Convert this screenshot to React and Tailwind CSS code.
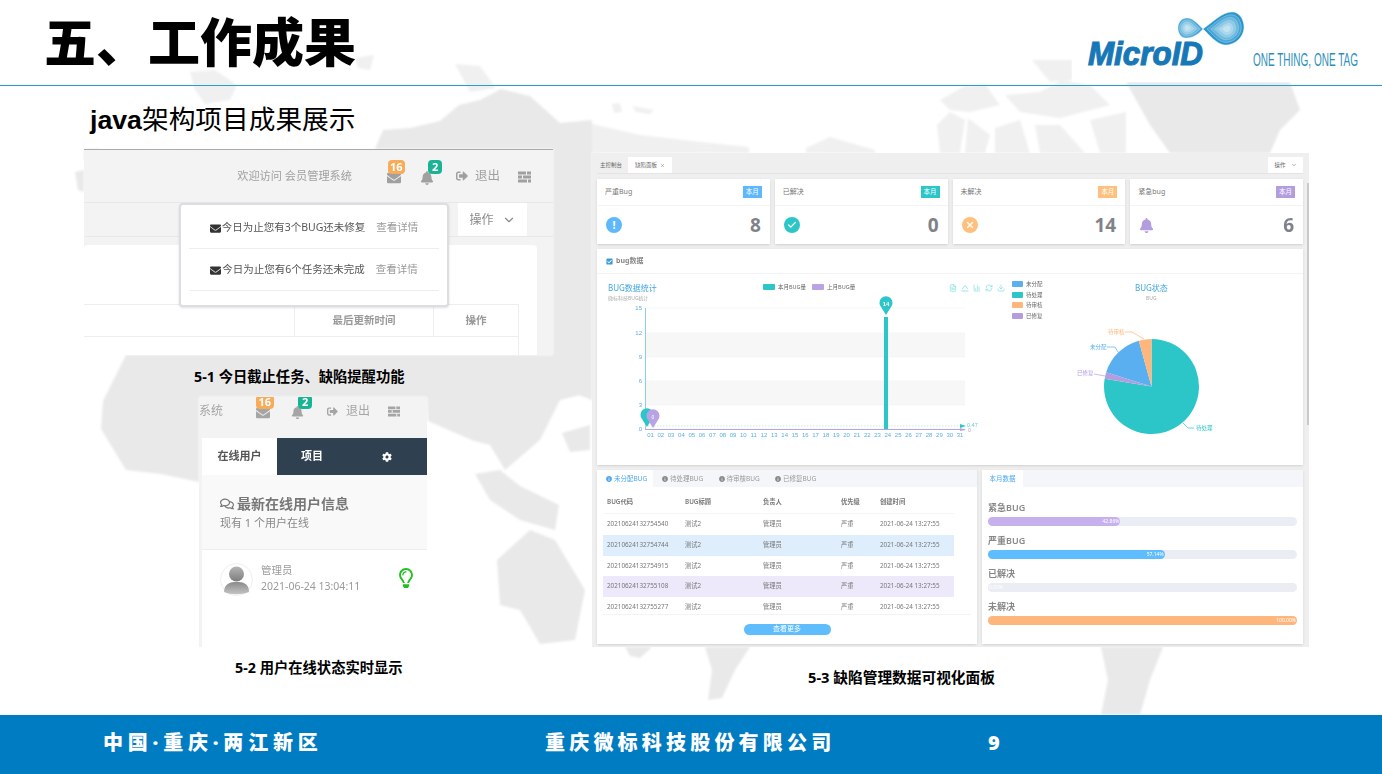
import React from 'react';
import { ChevronDown, FileText, RefreshCw, Download, BarChart3, Check, X } from 'lucide-react';
import { FaEnvelope, FaBell, FaSignOutAlt, FaCog, FaRegComments, FaRegLightbulb, FaCheckSquare, FaInfoCircle } from 'react-icons/fa';

const cjk = "font-['Noto_Sans','Noto_Sans_CJK_SC',sans-serif]";

// backdrop world map blotches, page coordinates
const mapShapes = [
  // russia / asia behind the first panel
  '375,149 383,130 410,128 440,121 459,105 480,100 501,89 530,96 560,123 592,120 592,400 570,392 553,372 553,149',
  '84,149 100,149 84,160',
  // band below the first panel, africa
  '126,355 592,355 592,392 560,400 540,440 505,470 490,445 474,441 428,421 427,397 199,397 199,482 161,474 126,470 101,429 103,401',
  '75,172 84,170 84,192 78,190',
  // indonesia, japan
  '475,474 500,470 520,486 559,505 555,530 520,520 490,500',
  '562,433 590,425 590,450 570,452',
  // australia
  '497,560 530,530 555,540 585,590 575,640 540,644 520,610 500,605',
  // greenland
  '1126,82 1290,82 1300,110 1280,130 1270,153 1170,153 1150,125',
  // south america strips under the dashboard
  '625,647 652,647 640,658 630,656',
  '705,647 750,647 735,670 722,698 708,700 712,670',
  '1101,647 1163,647 1150,680 1140,715 1101,715 1108,680',
];

// paler, broken up shapes: islands and the arctic archipelago
const islandShapes = [
  '190,72 215,70 237,85 230,100 205,104 195,90',
  '455,64 480,66 496,88 470,92',
  '355,58 374,55 370,70 358,68',
  '612,104 620,103 622,112 614,113',
  '632,106 654,110 650,114 636,112',
  '592,124 610,128 640,135 700,142 749,147 749,153 592,153',
  '806,148 830,137 875,150 875,153 806,153',
  '937,125 950,112 965,120 960,153 940,153',
  '968,118 990,135 985,153 965,153',
  '995,128 1020,120 1030,153 995,153',
  '1035,125 1060,125 1085,153 1040,153',
  '940,100 965,86 985,84 1000,105 970,112 950,110',
  '1005,95 1040,92 1062,80 1090,85 1110,105 1060,118 1020,112',
  '1090,120 1126,112 1126,153 1100,153',
  '1032,60 1072,60 1072,80 1050,82',
];

const statCards = [
  { title: '严重Bug', tag: 'bg-[#5fb8fb]', value: '8', icon: <span className="flex size-4 items-center justify-center rounded-full bg-[#5fb8fb] text-[11px] font-bold text-white">!</span> },
  { title: '已解决', tag: 'bg-[#2cc6c8]', value: '0', icon: <span className="flex size-4 items-center justify-center rounded-full bg-[#2cc6c8] text-white"><Check size={10} strokeWidth={3} /></span> },
  { title: '未解决', tag: 'bg-[#ffc07e]', value: '14', icon: <span className="flex size-4 items-center justify-center rounded-full bg-[#ffc07e] text-white"><X size={10} strokeWidth={3} /></span> },
  { title: '紧急bug', tag: 'bg-[#b39ddf]', value: '6', icon: <FaBell size={15} className="text-[#b39ddf]" /> },
];

const bugRows = [
  ['20210624132754540', ''],
  ['20210624132754744', 'bg-[#deeefc]'],
  ['20210624132754915', ''],
  ['20210624132755108', 'bg-[#ede8fa]'],
  ['20210624132755277', ''],
];

const progress = [
  { label: '紧急BUG', pct: 42.86, text: '42.86%', color: 'bg-[#c7b0ee]' },
  { label: '严重BUG', pct: 57.14, text: '57.14%', color: 'bg-[#5fbdfd]' },
  { label: '已解决', pct: 0, text: '0.00%', color: 'bg-[#ebedf5]' },
  { label: '未解决', pct: 100, text: '100.00%', color: 'bg-[#ffb67c]' },
];

const days = Array.from({ length: 31 }, (_, i) => String(i + 1).padStart(2, '0'));

const pieSlice = (cx, cy, r, from, to) => {
  const p = (a) => [cx + r * Math.sin((a * Math.PI) / 180), cy - r * Math.cos((a * Math.PI) / 180)];
  const [x1, y1] = p(from);
  const [x2, y2] = p(to);
  return `M${cx} ${cy}L${x1} ${y1}A${r} ${r} 0 ${to - from > 180 ? 1 : 0} 1 ${x2} ${y2}Z`;
};

// the three notched bars of the top bar menu button
function MenuGlyph({ size }) {
  return (
    <svg width={size} height={size} viewBox="0 0 13 13" fill="currentColor">
      <path d="M0 1.5H8V4.5H0ZM9 1.5H13V4.5H9ZM0 5.5H4V8.5H0ZM5 5.5H13V8.5H5ZM0 9.5H9V12.5H0ZM10 9.5H13V12.5H10Z" />
    </svg>
  );
}

function Logo() {
  const lobeFills = ['#2a94cc', '#4aa6d6', '#6cb8de', '#8ccae6', '#a9d7ec', '#c3e3f2'];
  return (
    <div className="absolute left-[1072px] top-0 h-[82px] w-[310px] bg-white">
      <svg width="310" height="82" viewBox="0 0 310 82">
        {lobeFills.map((fill, i) => (
          <path key={fill} transform={`translate(155 29) scale(${1 - i * 0.16}) translate(-155 -29)`} fill={fill} stroke="#e4f3fa" strokeWidth="0.4" d="M131 29 C140 23 150 12 160 12 C168 12 172 20 172 28 C171 38 163 45 153 45 C144 44 138 35 131 29Z" />
        ))}
        {lobeFills.slice(1).map((fill, i) => (
          <path key={fill} transform={`translate(115 28) scale(${1 - i * 0.19}) translate(-115 -28)`} fill={fill} stroke="#e4f3fa" strokeWidth="0.4" d="M131 29 C126 35 120 38 114 38 C109 38 106 33 106 28 C106 22 110 18 115 18 C121 18 126 24 131 29Z" />
        ))}
        <text x="16" y="65" textLength="115" lengthAdjust="spacingAndGlyphs" fill="#1778b8" stroke="#1778b8" strokeWidth="1.2" fontSize="34" fontWeight="900" fontStyle="italic" fontFamily="Liberation Sans">MicroID</text>
        <text x="181" y="66" textLength="105" lengthAdjust="spacingAndGlyphs" fill="#2f8fbb" fontSize="19" fontFamily="Liberation Sans">ONE THING, ONE TAG</text>
      </svg>
    </div>
  );
}

function ReminderPanel() {
  const notices = ['今日为止您有3个BUG还未修复', '今日为止您有6个任务还未完成'];
  return (
    <div className="absolute left-[84px] top-[149px] h-[206px] w-[469px] border-t border-[#aaaaaa] bg-[#f3f3f3] blur-[0.3px]">
      <div className="flex h-[53px] items-center justify-end border-b border-[#e8e8e8] pr-[22px] text-[#a0a0a0]">
        <span className="mr-[35px] text-[11.2px]">欢迎访问 会员管理系统</span>
        <span className="relative mr-[19px] mt-[3px]">
          <FaEnvelope size={14} />
          <span className="absolute -top-[11px] left-px rounded-sm bg-[#f8ac59] px-[2px] text-[11px] leading-[14px] font-bold text-white">16</span>
        </span>
        <span className="relative mr-[22px] mt-[3px]">
          <FaBell size={14} />
          <span className="absolute -top-[11px] left-[8px] rounded-sm bg-[#1ab394] px-[4px] text-[11px] leading-[14px] font-bold text-white">2</span>
        </span>
        <FaSignOutAlt size={12} />
        <span className="ml-[7px] mr-[18px] text-[12.5px]">退出</span>
        <MenuGlyph size={13} />
      </div>
      <div className="flex h-[34px] justify-end border-b border-[#e8e8e8] pr-[26px]">
        <span className="flex w-[69px] items-center justify-center gap-2 bg-white text-xs text-[#8a8a8a]">操作 <ChevronDown size={14} /></span>
      </div>
      <div className="ml-auto mt-[8px] mr-[16px] h-[110px] rounded-t-sm bg-white pt-[59px] pr-[18px]">
        <div className="grid h-[33px] grid-cols-[1fr_139px_86px] border-y border-[#eeeeee] text-[10.5px] font-bold text-[#999999]">
          <span />
          <span className="flex items-center justify-center border-l border-[#eeeeee]">最后更新时间</span>
          <span className="flex items-center justify-center border-x border-[#eeeeee]">操作</span>
        </div>
        <div className="h-[18px] border-r border-[#eeeeee]" />
      </div>
      <div className="absolute left-[95px] top-[53px] h-[104px] w-[270px] rounded border-2 border-[#dddde4] bg-white px-[8px] pt-[2px] shadow-sm">
        {notices.map((n) => (
          <div key={n} className="flex h-[42px] items-center justify-center gap-[11px] border-b border-[#eeeeee] pt-px text-[10.5px] text-[#555555]">
            <span className="flex items-center gap-[1px]"><FaEnvelope size={11} className="text-[#333333]" />{n}</span>
            <span className="text-[#999999]">查看详情</span>
          </div>
        ))}
      </div>
    </div>
  );
}

function OnlinePanel() {
  return (
    <div className="absolute left-[199px] top-[397px] h-[250px] w-[228px] overflow-hidden bg-[#f3f3f3] blur-[0.3px]">
      <div className="flex h-[28px] items-center justify-end pr-[27px] text-[#a5a5a5]">
        <span className="mr-auto text-xs">系统</span>
        <span className="relative mr-[21px] mt-[3px]">
          <FaEnvelope size={14} />
          <span className="absolute -top-[11px] left-0 rounded-sm bg-[#f8ac59] px-[2.5px] text-[11px] leading-[14px] font-bold text-white">16</span>
        </span>
        <span className="relative mr-[23px] mt-[3px]">
          <FaBell size={13} />
          <span className="absolute -top-[11px] left-[7px] rounded-sm bg-[#1ab394] px-[4px] text-[11px] leading-[14px] font-bold text-white">2</span>
        </span>
        <FaSignOutAlt size={11} />
        <span className="ml-[8px] mr-[18px] text-xs">退出</span>
        <MenuGlyph size={12} />
      </div>
      <div className="ml-[3px] mt-[13px] grid h-[37px] grid-cols-[75px_70px_1fr] text-[11px] font-bold text-white">
        <span className="flex items-center justify-center bg-white text-[#555555]">在线用户</span>
        <span className="flex items-center justify-center bg-[#2f4050]">项目</span>
        <span className="flex items-center justify-center bg-[#2f4050]"><FaCog size={10} /></span>
      </div>
      <div className="ml-[3px] h-[172px] bg-white">
        <div className="h-[75px] border-b border-[#eeeeee] bg-[#f9f9f9] pl-[18px] pt-[19px]">
          <div className="flex items-center gap-[3px] text-sm font-bold text-[#777777]"><FaRegComments size={14} />最新在线用户信息</div>
          <div className="mt-[1px] text-[11px] text-[#888888]">现有 1 个用户在线</div>
        </div>
        <div className="flex items-start pl-[18px] pt-[13px]">
          <svg width="33" height="33" viewBox="0 0 33 33">
            <defs>
              <linearGradient id="avatarHead" x1="0" y1="0" x2="0" y2="1">
                <stop offset="0" stopColor="#b5b5b5" />
                <stop offset="1" stopColor="#7d7d7d" />
              </linearGradient>
              <linearGradient id="avatarBody" x1="0" y1="0" x2="0" y2="1">
                <stop offset="0" stopColor="#8a8a8a" />
                <stop offset="1" stopColor="#c4c4c4" />
              </linearGradient>
            </defs>
            <circle cx="16.5" cy="16.5" r="16" fill="#fff" stroke="#eeeeee" />
            <circle cx="16.5" cy="11" r="7.5" fill="url(#avatarHead)" />
            <path d="M4 29 C4 20 11 19 16.5 19 C23 19 29 20 29 29 C22 32 10 32 4 29Z" fill="url(#avatarBody)" />
          </svg>
          <div className="ml-[8px] -mt-px text-[10.5px] leading-[16px] text-[#9a9a9a]">
            <div>管理员</div>
            <div className="whitespace-nowrap">2021-06-24 13:04:11</div>
          </div>
          <FaRegLightbulb size={20} className="ml-[36px] mt-[5px] text-[#1fc01f]" />
        </div>
      </div>
    </div>
  );
}

function LineGlyph() {
  return (
    <svg width="8" height="8" viewBox="0 0 8 8" fill="none" stroke="currentColor" strokeWidth="0.8">
      <path d="M0.5 7H7.5M1 5L4 1.5L7 5" />
    </svg>
  );
}

function BugChart() {
  const yTicks = [[15, 308], [12, 333], [9, 357], [6, 381], [3, 405], [0, 429]];
  return (
    <svg width="350" height="150" viewBox="630 295 350 150" className="absolute left-[33px] top-[46px]" fontFamily="Liberation Sans">
      <rect x="645" y="333" width="320" height="24" fill="#f7f7f7" />
      <rect x="645" y="381" width="320" height="24" fill="#f7f7f7" />
      {yTicks.map(([v, y]) => (
        <g key={v}>
          <line x1="645" x2="965" y1={y} y2={y} stroke="#f2f2f2" strokeWidth="0.7" />
          <text x="642" y={y + 2} textAnchor="end" fontSize="6" fill="#5ab0e0">{v}</text>
        </g>
      ))}
      <line x1="645.5" x2="645.5" y1="308" y2="430" stroke="#8dcdee" />
      <line x1="645" x2="965" y1="429.5" y2="429.5" stroke="#b9a3e3" />
      <line x1="645" x2="962" y1="426" y2="426" stroke="#bfeeee" strokeWidth="1.2" strokeDasharray="1.5 1.5" />
      {days.map((d, i) => (
        <text key={d} x={650.5 + i * 10.32} y="437" textAnchor="middle" fontSize="6" fill="#5ab0e0">{d}</text>
      ))}
      <rect x="884" y="317" width="4" height="112" fill="#2cc6c8" />
      <path d="M886 315 L881 307 A6.5 6.5 0 1 1 891 307Z" fill="#2cc6c8" />
      <text x="886" y="306" textAnchor="middle" fontSize="6" fontWeight="700" fill="#fff">14</text>
      <path d="M647 427 L642 419 A6.5 6.5 0 1 1 652 419Z" fill="#2cc6c8" />
      <path d="M653 428 L648 420 A6.5 6.5 0 1 1 658 420Z" fill="#b9a3e3" />
      <text x="653" y="419" textAnchor="middle" fontSize="5" fill="#fff">0</text>
      <path d="M960 424 L966 426 L960 428Z" fill="#2cc6c8" />
      <path d="M960 428 L966 430 L960 431Z" fill="#b9a3e3" />
      <text x="967" y="427" fontSize="5.5" fill="#5fd0d0">0.47</text>
      <text x="968" y="432" fontSize="5.5" fill="#b9a3e3">0</text>
    </svg>
  );
}

function BugPie() {
  const cx = 154.5;
  const cy = 106.5;
  const r = 47.5;
  return (
    <svg width="240" height="190" viewBox="0 0 240 190" className="absolute left-[400px] top-[31px]" fontFamily="Noto Sans CJK SC">
      <path d={pieSlice(cx, cy, r, 0, 279.5)} fill="#2cc6c8" />
      <path d={pieSlice(cx, cy, r, 279.5, 287.5)} fill="#b39ddf" />
      <path d={pieSlice(cx, cy, r, 287.5, 344.5)} fill="#5aaff0" />
      <path d={pieSlice(cx, cy, r, 344.5, 360)} fill="#ffb67c" />
      <g fill="none" strokeWidth="0.7">
        <path d="M186 143 L191 148 L197 148" stroke="#2cc6c8" />
        <path d="M97 94 L108 96" stroke="#b39ddf" />
        <path d="M110 67 L118 67 L121 72" stroke="#5aaff0" />
        <path d="M128 52 L135 52 L147 59" stroke="#ffb67c" />
      </g>
      <g fontSize="5.5">
        <text x="199" y="150" fill="#2cc6c8">待处理</text>
        <text x="80" y="95" fill="#b39ddf">已修复</text>
        <text x="93" y="69" fill="#5aaff0">未分配</text>
        <text x="111" y="54" fill="#ffb67c">待审核</text>
      </g>
    </svg>
  );
}

function DashboardPanel() {
  const legend = [['未分配', 'bg-[#5aaff0]'], ['待处理', 'bg-[#2cc6c8]'], ['待审核', 'bg-[#ffb67c]'], ['已修复', 'bg-[#b39ddf]']];
  return (
    <div className="absolute left-[592px] top-[153px] h-[494px] w-[717px] bg-[#efefef] pl-[5px] pr-[6px] pt-[4px] blur-[0.3px]">
      <div className="flex h-[17px] items-center justify-between border-b border-[#e4e4e4] text-[5.5px] text-[#666666]">
        <div className="flex h-full items-center">
          <span className="px-[3px]">主控制台</span>
          <span className="ml-[3px] flex h-full items-center gap-[3px] bg-white px-[7px]">缺陷面板 <X size={5} /></span>
        </div>
        <span className="flex h-full w-[35px] items-center justify-center gap-[5px] bg-white">操作 <ChevronDown size={6} /></span>
      </div>
      <div className="mt-[5px] grid h-[65px] grid-cols-4 gap-[5px]">
        {statCards.map((c) => (
          <div key={c.title} className="flex flex-col bg-white shadow-sm">
            <div className="flex h-[27px] items-center justify-between border-b border-[#f3f3f3] px-[8px] text-[7px] text-[#777777]">
              {c.title}
              <span className={`${c.tag} px-[3px] py-px text-[6.5px] text-white`}>本月</span>
            </div>
            <div className="flex flex-1 items-center justify-between px-[9px]">
              {c.icon}
              <span className="text-[19px] font-bold text-[#7f8289]">{c.value}</span>
            </div>
          </div>
        ))}
      </div>
      <div className="relative mt-[5px] h-[216px] bg-white shadow-sm">
        <div className="flex h-[25px] items-center gap-[3px] border-b border-[#f3f3f3] px-[9px] text-[7px] font-bold text-[#888888]">
          <FaCheckSquare size={7} className="text-[#3a9bd8]" />bug数据
        </div>
        <div className="absolute left-[11px] top-[34px] text-[8px] leading-[10px] text-[#3fa5de]">BUG数据统计</div>
        <div className="absolute left-[11px] top-[46px] text-[5px] text-[#aaaaaa]">微标科技BUG统计</div>
        <div className="absolute left-[166px] top-[34px] flex items-center gap-[3px] text-[5.5px] text-[#666666]">
          <i className="h-[6px] w-[12px] rounded-[1px] bg-[#2cc6c8]" />本月BUG量
          <i className="ml-[3px] h-[6px] w-[12px] rounded-[1px] bg-[#b9a3e3]" />上月BUG量
        </div>
        <div className="absolute left-[352px] top-[35px] flex gap-[4px] text-[#7fdede]">
          <FileText size={8} /><LineGlyph /><BarChart3 size={8} /><RefreshCw size={8} /><Download size={8} />
        </div>
        <div className="absolute left-[415px] top-[32px] flex flex-col gap-[4.5px] text-[5.5px] leading-[6px] text-[#666666]">
          {legend.map(([l, c]) => (
            <div key={l} className="flex items-center gap-[3px]"><i className={`h-[6px] w-[11px] rounded-[1px] ${c}`} />{l}</div>
          ))}
        </div>
        <div className="absolute left-[538px] top-[34px] text-[8px] leading-[10px] text-[#3fa5de]">BUG状态</div>
        <div className="absolute left-[549px] top-[46px] text-[5px] text-[#aaaaaa]">BUG</div>
        <BugChart />
        <BugPie />
      </div>
      <div className="mt-[5px] grid h-[174px] grid-cols-[380px_1fr] gap-[5px]">
        <div className="bg-white shadow-sm">
          <div className="flex h-[17px] items-center bg-[#f4f6fa] text-[6.5px] text-[#999999]">
            <span className="flex h-full w-[56px] items-center gap-[2px] bg-white pl-[9px] text-[#4da8f0]"><FaInfoCircle size={6} />未分配BUG</span>
            {['待处理BUG', '待审核BUG', '已修复BUG'].map((t) => (
              <span key={t} className="flex w-[56.5px] items-center gap-[2px] pl-[9px]"><FaInfoCircle size={6} className="text-[#888888]" />{t}</span>
            ))}
          </div>
          <div className="ml-[6px] mt-[5px] h-[122px] w-[351px] overflow-hidden text-[6.3px] text-[#777777]">
            <div className="grid h-[22px] grid-cols-[78px_78px_78px_39px_1fr] items-center border-b border-[#f6f6f6] pb-[2px] pl-[4px] font-semibold">
              <span>BUG代码</span><span>BUG标题</span><span>负责人</span><span>优先级</span><span>创建时间</span>
            </div>
            {bugRows.map(([code, rowBg]) => (
              <div key={code} className={`grid h-[20.75px] grid-cols-[78px_78px_78px_39px_1fr] items-center pb-[1px] pl-[4px] ${rowBg}`}>
                <span>{code}</span><span>测试2</span><span>管理员</span><span>严重</span><span>2021-06-24 13:27:55</span>
              </div>
            ))}
          </div>
          <div className="mx-[6px] flex justify-center border-t border-[#f3f3f3] pt-[9px]">
            <span className="flex h-[11px] w-[87px] items-center justify-center rounded-full bg-[#5fbdfd] text-[7px] text-white">查看更多</span>
          </div>
        </div>
        <div className="bg-white shadow-sm">
          <div className="flex h-[17px] bg-[#f4f6fa] text-[6.5px] text-[#4da8f0]">
            <span className="flex w-[41px] items-center justify-center bg-white">本月数据</span>
          </div>
          <div className="px-[6px] pt-[15px]">
            {progress.map((p) => (
              <div key={p.label} className="mb-[6px] h-[27px]">
                <div className="text-[9px] leading-[12px] font-semibold text-[#888888]">{p.label}</div>
                <div className="mt-[3px] h-[9px] rounded-full bg-[#ebedf5]">
                  <div className={`flex h-full min-w-[16px] items-center justify-end rounded-full pr-[1px] text-[5px] text-white ${p.color}`} style={{ width: `${p.pct}%` }}>{p.text}</div>
                </div>
              </div>
            ))}
          </div>
        </div>
      </div>
      <div className="absolute right-0 top-[30px] h-[242px] w-[2px] bg-[#c9c9c9]" />
    </div>
  );
}

export default function App() {
  return (
    <div className={`relative h-[774px] w-[1382px] overflow-hidden bg-white ${cjk}`}>
      <svg width="1382" height="774" className="absolute left-0 top-0 blur-[1px]">
        {mapShapes.map((pts) => <polygon key={pts} points={pts} fill="#e9e9e9" />)}
        {islandShapes.map((pts) => <polygon key={pts} points={pts} fill="#f0f0f0" />)}
      </svg>
      <div className="relative flex h-[85px] w-full items-center pl-[44px]">
        <h1 className="-mt-[1px] text-[52px] leading-none font-black text-black">五、工作成果</h1>
      </div>
      <Logo />
      <div className="absolute left-0 top-[85px] h-px w-full bg-[#2b9ad0]" />
      <h2 className="absolute left-[90px] top-[100px] text-[26.7px] leading-[38px] text-black"><b className="font-['Liberation_Sans']">java</b>架构项目成果展示</h2>
      <ReminderPanel />
      <p className="absolute left-[194px] top-[368px] text-[14.3px] leading-[18px] font-bold whitespace-nowrap text-black">5-1 今日截止任务、缺陷提醒功能</p>
      <OnlinePanel />
      <p className="absolute left-[235px] top-[659px] text-[14.3px] leading-[18px] font-bold whitespace-nowrap text-black">5-2 用户在线状态实时显示</p>
      <DashboardPanel />
      <p className="absolute left-[808px] top-[668px] text-[14.7px] leading-[18px] font-bold whitespace-nowrap text-black">5-3 缺陷管理数据可视化面板</p>
      <footer className="absolute bottom-0 left-0 flex h-[59px] w-full items-center bg-[#007cc3] pb-[4px] pl-[103px] font-black text-white">
        <span className="w-[442px] text-xl tracking-[4.8px]">中国·重庆·两江新区</span>
        <span className="w-[443px] text-xl tracking-[4.2px]">重庆微标科技股份有限公司</span>
        <span className="text-xl">9</span>
      </footer>
    </div>
  );
}
